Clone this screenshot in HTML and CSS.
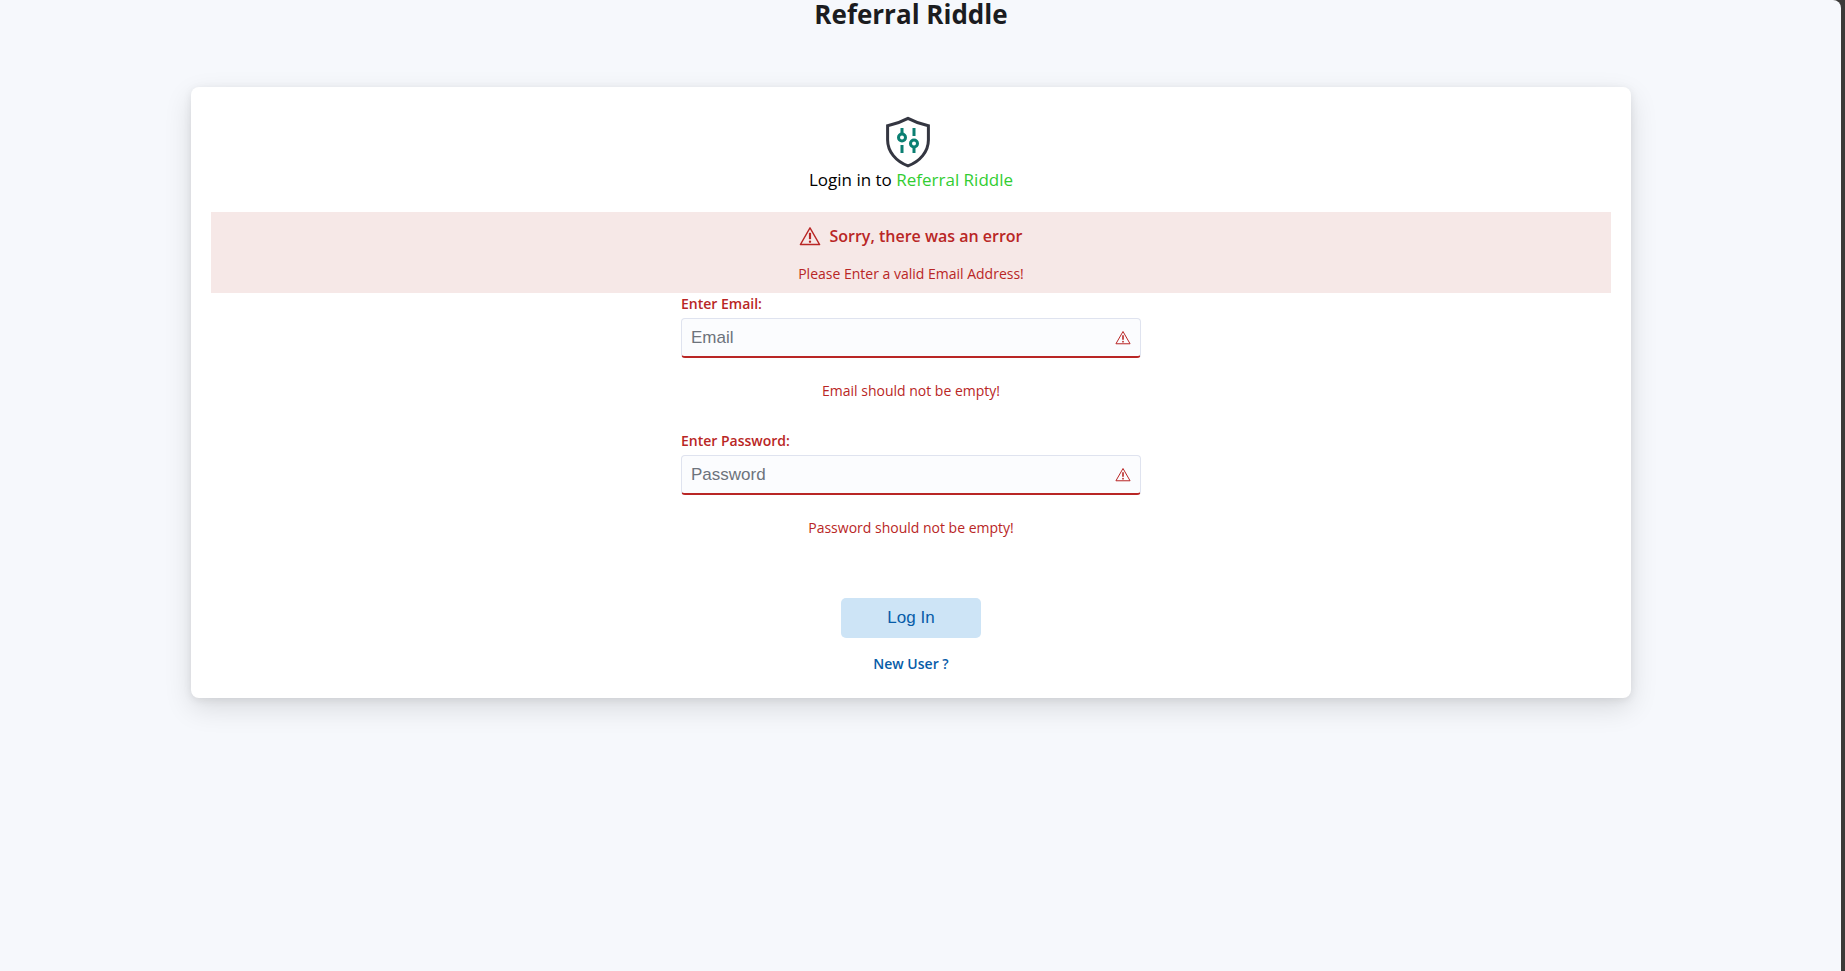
FILE: index.html
```html
<!DOCTYPE html>
<html lang="en">
<head>
<meta charset="utf-8">
<meta name="viewport" content="width=device-width, initial-scale=1">
<title>Referral Riddle</title>
<link rel="stylesheet" href="styles.css">
</head>
<body>
<svg class="defs" aria-hidden="true">
  <symbol id="warning" viewBox="0 0 24 22">
    <path d="M12 2 22.6 20.4H1.4Z" fill="none" stroke="currentColor" stroke-width="1.5" stroke-linejoin="round"/>
    <path d="M12 7.500v7" fill="none" stroke="currentColor" stroke-width="2.400"/>
    <circle cx="12" cy="17.2" r="1.3" fill="currentColor"/>
  </symbol>
</svg>
<div class="page">
  <h1 class="title">Referral Riddle</h1>
  <main class="card">
    <svg class="logo" viewBox="0 0 46 52" aria-hidden="true">
      <path d="M23 2.4C17 5.600 9.500 8.400 2.600 9.800V24C2.600 35.500 11 45.500 23 49.800 35 45.500 43.400 35.500 43.400 24V9.800C36.500 8.400 29 5.600 23 2.400Z" fill="none" stroke="#343641" stroke-width="3"/>
      <g fill="none" stroke="#0b7f72" stroke-width="3">
        <path d="M17 12v6M17 29v8M29 12v8M29 30v7"/>
        <circle cx="17" cy="21.500" r="3.500"/>
        <circle cx="29" cy="27.500" r="3.500"/>
      </g>
    </svg>
    <h2 class="subtitle">Login in to <span class="brand">Referral Riddle</span></h2>
    <section class="alert" role="alert">
      <h3 class="alert-title"><svg class="alert-icon" aria-hidden="true"><use href="#warning"/></svg>Sorry, there was an error</h3>
      <p class="message">Please Enter a valid Email Address!</p>
    </section>
    <form class="form" novalidate>
      <label class="label" for="email">Enter Email:</label>
      <div class="field">
        <input class="input" id="email" type="email" placeholder="Email">
        <svg class="field-icon" aria-hidden="true"><use href="#warning"/></svg>
      </div>
      <p class="message field-message">Email should not be empty!</p>
      <label class="label" for="password">Enter Password:</label>
      <div class="field">
        <input class="input" id="password" type="password" placeholder="Password">
        <svg class="field-icon" aria-hidden="true"><use href="#warning"/></svg>
      </div>
      <p class="message field-message">Password should not be empty!</p>
      <button class="button" type="submit">Log In</button>
      <a class="link" href="#new-user">New User ?</a>
    </form>
  </main>
</div>
</body>
</html>
```
FILE: styles.css
```css
* {
  box-sizing: border-box;
}

body {
  margin: 0;
  padding-right: 4px;
  background: #3b3a38;
  font-family: "Segoe UI", "Open Sans", sans-serif;
  font-size: 14px;
  line-height: 20px;
  color: #b92625;
}

.defs {
  position: absolute;
  width: 0;
  height: 0;
}

.page {
  min-height: 100vh;
  padding: 0 19px 48px 0;
  border-top-right-radius: 8px;
  background: #f6f8fc;
}

.title {
  margin: 0;
  padding-bottom: 59px;
  font-size: 26px;
  line-height: 28px;
  font-weight: 700;
  text-align: center;
  color: #1b1c20;
}

.card {
  display: flex;
  flex-direction: column;
  align-items: center;
  width: 79%;
  margin: 0 auto;
  padding: 29px 20px 24px;
  border-radius: 8px;
  background: #fff;
  box-shadow: 0 10px 28px rgba(0, 0, 0, 0.12), 0 2px 8px rgba(0, 0, 0, 0.08);
}

.logo {
  width: 46px;
  height: 52px;
  margin-right: 6px;
}

.subtitle {
  margin: 0 0 20px;
  font-size: 17px;
  line-height: 24px;
  font-weight: 400;
  color: #000;
}

.brand {
  color: #32cd32;
}

.alert {
  align-self: stretch;
  padding: 12px 20px 9px;
  background: #f6e8e7;
  text-align: center;
}

.alert-title {
  display: flex;
  align-items: center;
  justify-content: center;
  gap: 8px;
  margin: 0 0 16px;
  font-size: 16px;
  line-height: 24px;
  font-weight: 600;
}

.alert-icon {
  width: 22px;
  height: 20px;
}

.message {
  margin: 0;
  text-align: center;
}

.form {
  display: flex;
  flex-direction: column;
  width: 460px;
  max-width: 100%;
}

.label {
  padding: 1px 0 4px;
  font-weight: 600;
}

.field {
  display: flex;
  align-items: center;
  height: 40px;
  padding: 0 9px;
  border: 1px solid #dfe3ef;
  border-bottom: 2px solid #b92625;
  border-radius: 4px;
  background: #fbfcfe;
}

.input {
  flex: 1;
  min-width: 0;
  padding: 0;
  border: 0;
  outline: 0;
  background: transparent;
  font: 17px "Liberation Sans", Arial, sans-serif;
  color: #1b1c20;
}

.input::placeholder {
  color: #6d737c;
}

.field-icon {
  width: 16px;
  height: 15px;
}

.field-message {
  padding: 23px 0 29px;
}

.button {
  align-self: center;
  width: 140px;
  height: 40px;
  margin: 31px 0 16px;
  border: 0;
  border-radius: 5px;
  background: #cde4f6;
  font: 17px "Liberation Sans", Arial, sans-serif;
  color: #075ca8;
}

.link {
  align-self: center;
  font-weight: 600;
  text-decoration: none;
  color: #075ca8;
}
```
